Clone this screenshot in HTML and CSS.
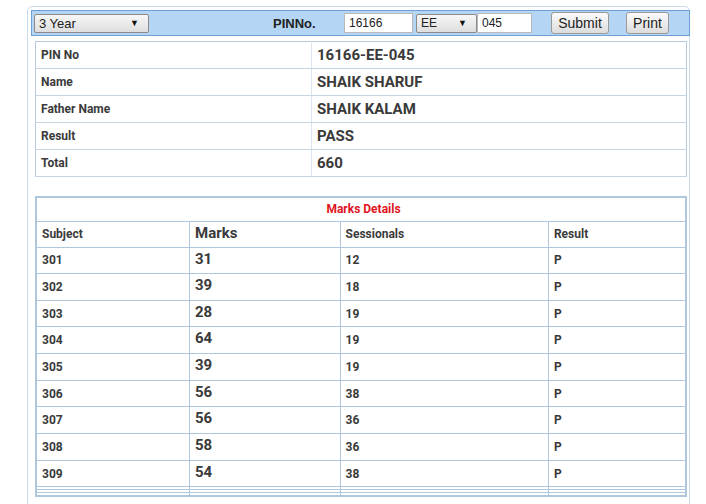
FILE: index.html
```html
<!DOCTYPE html>
<html lang="en">
<head>
    <meta charset="UTF-8">
    <title>Result</title>
    <link rel="stylesheet" href="styles.css">
</head>
<body>

<div class="container">
    <div class="toolbar">
        <div class="sel sel-year"><span>3 Year</span><span class="arrow">&#9660;</span></div>
        <span class="pin-label">PINNo.</span>
        <div class="field field-code">16166</div>
        <div class="sel sel-branch"><span>EE</span><span class="arrow">&#9660;</span></div>
        <div class="field field-roll">045</div>
        <button class="btn btn-submit">Submit</button>
        <button class="btn btn-print">Print</button>
    </div>

    <table class="info">
        <tr><td class="label">PIN No</td><td class="value">16166-EE-045</td></tr>
        <tr><td class="label">Name</td><td class="value">SHAIK SHARUF</td></tr>
        <tr><td class="label">Father Name</td><td class="value">SHAIK KALAM</td></tr>
        <tr><td class="label">Result</td><td class="value">PASS</td></tr>
        <tr><td class="label">Total</td><td class="value">660</td></tr>
    </table>

    <table class="marks">
        <tr class="caption"><td colspan="4">Marks Details</td></tr>
        <tr class="head">
            <td class="c1">Subject</td>
            <td class="c2 big">Marks</td>
            <td class="c3">Sessionals</td>
            <td class="c4">Result</td>
        </tr>
        <tr><td>301</td><td class="big">31</td><td>12</td><td>P</td></tr>
        <tr><td>302</td><td class="big">39</td><td>18</td><td>P</td></tr>
        <tr><td>303</td><td class="big">28</td><td>19</td><td>P</td></tr>
        <tr><td>304</td><td class="big">64</td><td>19</td><td>P</td></tr>
        <tr><td>305</td><td class="big">39</td><td>19</td><td>P</td></tr>
        <tr><td>306</td><td class="big">56</td><td>38</td><td>P</td></tr>
        <tr><td>307</td><td class="big">56</td><td>36</td><td>P</td></tr>
        <tr><td>308</td><td class="big">58</td><td>36</td><td>P</td></tr>
        <tr><td>309</td><td class="big">54</td><td>38</td><td>P</td></tr>
        <tr class="empty"><td></td><td></td><td></td><td></td></tr>
        <tr class="empty"><td></td><td></td><td></td><td></td></tr>
        <tr class="empty"><td></td><td></td><td></td><td></td></tr>
    </table>
</div>

</body>
</html>
```

FILE: styles.css
```css
body {
    margin: 0;
    padding: 0;
    background: #fff;
    font-family: Roboto, 'Liberation Sans', Arial, sans-serif;
    color: #3a3a3a;
    overflow: hidden;
}
.container {
    margin: 6px 0 0 27px;
    width: 663px;
    height: 600px;
    padding: 3px 0 0 3px;
    border: 1px solid #c9dcee;
    border-radius: 5px;
    box-sizing: border-box;
}
.toolbar {
    display: flex;
    align-items: center;
    width: 659px;
    height: 26px;
    box-sizing: border-box;
    padding-left: 2px;
    background: #b5d5f5;
    border: 1px solid #6d9fd6;
    font-family: 'Liberation Sans', Arial, sans-serif;
    font-size: 13px;
    color: #222;
}
.sel {
    display: flex;
    align-items: center;
    justify-content: space-between;
    height: 19px;
    box-sizing: border-box;
    padding: 0 4px 0 4px;
    background: linear-gradient(#f7f7f7, #dedede);
    border: 1px solid #8a8a8a;
    border-radius: 2px;
}
.sel .arrow {
    font-size: 9px;
    color: #111;
}
.sel-year {
    width: 115px;
}
.sel-year .arrow {
    margin-right: 5px;
}
.pin-label {
    font-weight: bold;
    margin-left: 124px;
    width: 71px;
}
.field {
    height: 20px;
    box-sizing: border-box;
    padding: 2px 4px;
    background: #fff;
    border: 1px solid #b9b9b9;
    font-size: 12px;
}
.field-code {
    width: 69px;
}
.sel-branch {
    width: 61px;
    margin-left: 3px;
    font-size: 12px;
}
.sel-branch .arrow {
    margin-right: 5px;
}
.field-roll {
    width: 55px;
}
.btn {
    height: 22px;
    padding: 0;
    font-family: 'Liberation Sans', Arial, sans-serif;
    font-size: 14px;
    color: #222;
    background: linear-gradient(#fbfbfb, #dcdcdc);
    border: 1px solid #9a9a9a;
    border-radius: 3px;
}
.btn-submit {
    width: 58px;
    margin-left: 19px;
}
.btn-print {
    width: 43px;
    margin-left: 17px;
}
.info, .marks {
    border-collapse: collapse;
    width: 652px;
    margin-left: 4px;
    font-weight: bold;
}
.info {
    margin-top: 5px;
    border: 1px solid #b6cadb;
}
.info td {
    height: 27px;
    padding: 0 0 0 5px;
    border-bottom: 1px solid #c5d5e3;
    box-sizing: border-box;
}
.info .label {
    width: 276px;
    font-size: 12px;
    border-right: 1px solid #dde6ee;
}
.info .value {
    font-size: 15px;
}
.marks {
    margin-top: 19px;
    border: 2px solid #afc8de;
    font-size: 12px;
}
.marks td {
    height: 26.67px;
    padding: 0 0 0 5px;
    border: 1px solid #afc8de;
    box-sizing: border-box;
}
.marks .caption td {
    height: 24px;
    text-align: center;
    color: #e0141e;
}
.marks .head td {
    height: 26px;
}
.marks .c1 { width: 154px; }
.marks .c2 { width: 151px; }
.marks .c3 { width: 209px; }
.marks .c4 { width: 138px; }
.marks .big {
    font-size: 15px;
    vertical-align: top;
    padding-top: 2px;
}
.marks .empty td {
    height: 3px;
    padding: 0;
}
```
